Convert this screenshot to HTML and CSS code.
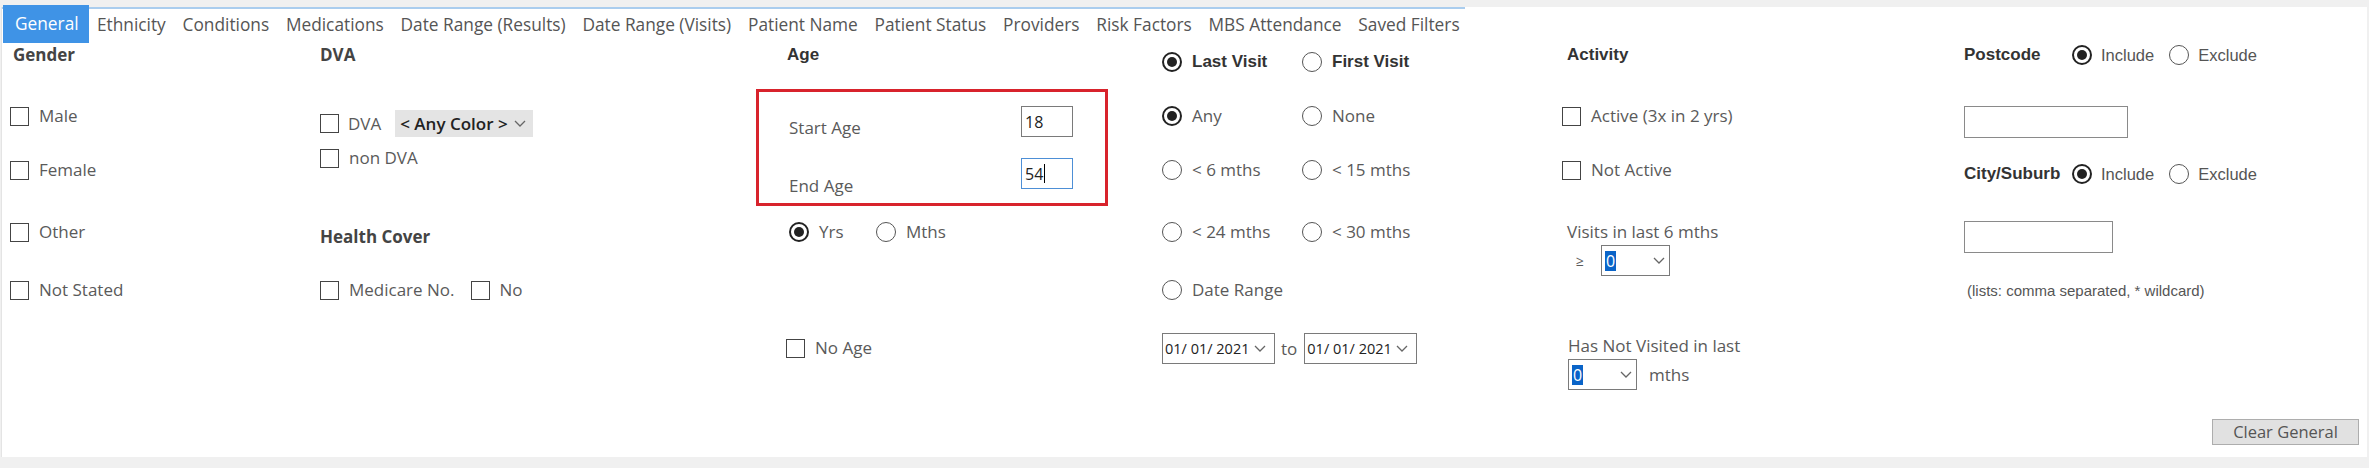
FILE: index.html
```html
<!DOCTYPE html>
<html>
<head>
<meta charset="utf-8">
<link rel="stylesheet" href="styles.css">
</head>
<body>
<div class="panel">
  <div class="tabs">
    <span class="tab active">General</span>
    <span class="tab">Ethnicity</span>
    <span class="tab">Conditions</span>
    <span class="tab">Medications</span>
    <span class="tab">Date Range (Results)</span>
    <span class="tab">Date Range (Visits)</span>
    <span class="tab">Patient Name</span>
    <span class="tab">Patient Status</span>
    <span class="tab">Providers</span>
    <span class="tab">Risk Factors</span>
    <span class="tab">MBS Attendance</span>
    <span class="tab">Saved Filters</span>
  </div>

  <div class="grid">
    <!-- Gender -->
    <div class="col">
      <div class="cell top"><span class="hdr pl3">Gender</span></div>
      <div class="cell"><div class="chk"><span class="box"></span>Male</div></div>
      <div class="cell"><div class="chk mtm4"><span class="box"></span>Female</div></div>
      <div class="cell"><div class="chk"><span class="box"></span>Other</div></div>
      <div class="cell"><div class="chk"><span class="box"></span>Not Stated</div></div>
      <div class="cell"></div>
    </div>

    <!-- DVA -->
    <div class="col">
      <div class="cell top"><span class="hdr">DVA</span></div>
      <div class="cell span2 dva">
        <div class="chk dvarow"><span class="box"></span>DVA
          <span class="combo">&lt; Any Color &gt;<svg class="chev" viewBox="0 0 12 7"><polyline points="1,1 6,6 11,1"/></svg></span>
        </div>
        <div class="chk nondva"><span class="box"></span>non DVA</div>
      </div>
      <div class="cell"><span class="hdr mt10">Health Cover</span></div>
      <div class="cell">
        <div class="chk"><span class="box"></span>Medicare No.</div>
        <div class="chk ml16"><span class="box"></span>No</div>
      </div>
      <div class="cell"></div>
    </div>

    <!-- Age -->
    <div class="col">
      <div class="cell top"><span class="hdr-ar pl31">Age</span></div>
      <div class="cell span2 agecell">
        <div class="agebox">
          <div class="agerow">
            <span class="agelbl">Start Age</span>
            <span class="ageinp">18</span>
          </div>
          <div class="agerow second">
            <span class="agelbl lower">End Age</span>
            <span class="ageinp focus">54<span class="caret"></span></span>
          </div>
        </div>
      </div>
      <div class="cell pl33">
        <div class="rad w87"><span class="dot on"></span>Yrs</div>
        <div class="rad"><span class="dot"></span>Mths</div>
      </div>
      <div class="cell"></div>
      <div class="cell pl30">
        <div class="chk"><span class="box"></span>No Age</div>
      </div>
    </div>

    <!-- Visits -->
    <div class="col">
      <div class="cell top pt7">
        <div class="rad w140 ar-b"><span class="dot on"></span>Last Visit</div>
        <div class="rad ar-b"><span class="dot"></span>First Visit</div>
      </div>
      <div class="cell">
        <div class="rad w140"><span class="dot on"></span>Any</div>
        <div class="rad"><span class="dot"></span>None</div>
      </div>
      <div class="cell">
        <div class="rad w140 mtm4"><span class="dot"></span>&lt; 6 mths</div>
        <div class="rad mtm4"><span class="dot"></span>&lt; 15 mths</div>
      </div>
      <div class="cell">
        <div class="rad w140"><span class="dot"></span>&lt; 24 mths</div>
        <div class="rad"><span class="dot"></span>&lt; 30 mths</div>
      </div>
      <div class="cell">
        <div class="rad"><span class="dot"></span>Date Range</div>
      </div>
      <div class="cell">
        <span class="date">01/ 01/ 2021<svg class="chev" viewBox="0 0 12 7"><polyline points="1,1 6,6 11,1"/></svg></span>
        <span class="to">to</span>
        <span class="date">01/ 01/ 2021<svg class="chev" viewBox="0 0 12 7"><polyline points="1,1 6,6 11,1"/></svg></span>
      </div>
    </div>

    <!-- Activity -->
    <div class="col">
      <div class="cell top"><span class="hdr-ar pl5">Activity</span></div>
      <div class="cell"><div class="chk"><span class="box"></span>Active (3x in 2 yrs)</div></div>
      <div class="cell"><div class="chk mtm4"><span class="box"></span>Not Active</div></div>
      <div class="cell stack pt19">
        <span class="small pl5">Visits in last 6 mths</span>
        <div class="ddrow">
          <span class="ge">&ge;</span>
          <span class="dd"><span class="sel">0</span><svg class="chev" viewBox="0 0 12 7"><polyline points="1,1 6,6 11,1"/></svg></span>
        </div>
      </div>
      <div class="cell"></div>
      <div class="cell stack pt17">
        <span class="small pl6">Has Not Visited in last</span>
        <div class="ddrow pl6">
          <span class="dd"><span class="sel">0</span><svg class="chev" viewBox="0 0 12 7"><polyline points="1,1 6,6 11,1"/></svg></span>
          <span class="mths">mths</span>
        </div>
      </div>
    </div>

    <!-- Postcode -->
    <div class="col">
      <div class="cell top">
        <span class="hdr-ar lblw">Postcode</span>
        <div class="rad ar g9"><span class="dot on"></span>Include</div>
        <div class="rad ar g9 ml15"><span class="dot"></span>Exclude</div>
      </div>
      <div class="cell"><span class="txt w164 mt11"></span></div>
      <div class="cell">
        <span class="hdr-ar lblw">City/Suburb</span>
        <div class="rad ar g9"><span class="dot on"></span>Include</div>
        <div class="rad ar g9 ml15"><span class="dot"></span>Exclude</div>
      </div>
      <div class="cell"><span class="txt w149 mt10"></span></div>
      <div class="cell"><span class="hint">(lists: comma separated, * wildcard)</span></div>
      <div class="cell"></div>
    </div>
  </div>

  <div class="footer">
    <button class="btn">Clear General</button>
  </div>
</div>
</body>
</html>
```

FILE: styles.css
```css
* { box-sizing: border-box; }
html, body { margin: 0; padding: 0; }
body {
  background: #f0f0f0;
  font-family: "Open Sans", "Noto Sans", sans-serif;
  font-size: 17px;
  color: #5a5a5a;
  width: 2369px;
  height: 468px;
  overflow: hidden;
}
.panel {
  margin: 7px 2px 0 1px;
  height: 450px;
  background: #fff;
  border-left: 1px solid #e4e4e4;
}

/* tabs */
.tabs {
  display: flex;
  width: 1463px;
  height: 36px;
  border-top: 2px solid #aacdee;
  padding-left: 1px;
  font-size: 17.3px;
  color: #555;
}
.tab { padding: 0 8.4px; line-height: 32px; white-space: nowrap; }
.tab.active {
  background: #3f93e6;
  color: #fff;
  margin-top: -4px;
  height: 38px;
  line-height: 38px;
  padding: 0 10px 0 12px;
}

/* grid */
.grid {
  display: grid;
  grid-template-columns: 310px 436px 406px 400px 402px 1fr;
  padding-left: 8px;
  height: 334px;
}
.col { display: grid; grid-template-rows: 44px repeat(5, 58px); }
.cell { display: flex; align-items: center; min-width: 0; white-space: nowrap; }
.cell.top { align-items: flex-start; }
.cell.stack { flex-direction: column; align-items: flex-start; justify-content: flex-start; }
.span2 { grid-row: span 2; }

.hdr { font-weight: 700; color: #444; line-height: 24px; font-size: 17px; }
.hdr-ar {
  font-family: "Liberation Sans", Arial, sans-serif;
  font-weight: 700;
  color: #333;
  font-size: 17px;
  line-height: 24px;
}
.ar-b { font-family: "Liberation Sans", Arial, sans-serif; font-weight: 700; color: #333; }
.ar { font-family: "Liberation Sans", Arial, sans-serif; font-size: 16.5px; color: #555; }

.pl3 { padding-left: 3px; }
.pl5 { padding-left: 5px; }
.pl6 { padding-left: 6px; }
.pl30 { padding-left: 30px; }
.pl31 { padding-left: 31px; }
.pl33 { padding-left: 33px; }
.pt7 { padding-top: 7px; }
.pt17 { padding-top: 17px; }
.pt19 { padding-top: 19px; }
.mt10 { margin-top: 10px; }
.mt11 { margin-top: 11px; }
.mtm4 { margin-top: -8px; }
.ml15 { margin-left: 15px; }
.ml16 { margin-left: 16px; }

/* checkbox */
.chk { display: flex; align-items: center; gap: 10px; line-height: 24px; }
.box {
  width: 19px;
  height: 19px;
  border: 1.5px solid #444;
  background: #fff;
  flex: none;
}

/* radio */
.rad { display: flex; align-items: center; gap: 10px; line-height: 24px; }
.rad.g9 { gap: 9px; }
.w140 { width: 140px; }
.w87 { width: 87px; }
.dot {
  width: 20px;
  height: 20px;
  border-radius: 50%;
  border: 1.5px solid #555;
  position: relative;
  flex: none;
}
.dot.on { border: 2px solid #222; }
.dot.on::after {
  content: "";
  position: absolute;
  inset: 3px;
  border-radius: 50%;
  background: #222;
}

/* DVA */
.dva {
  flex-direction: column;
  align-items: flex-start;
  justify-content: flex-start;
  padding-top: 23px;
}
.dvarow { height: 27px; gap: 9px; }
.nondva { margin-top: 11px; height: 20px; }
.combo {
  display: flex;
  align-items: center;
  width: 138px;
  height: 27px;
  margin-left: 5px;
  padding: 0 7px 0 5px;
  background: #e4e4e4;
  font-weight: 600;
  color: #222;
}
.chev {
  width: 12px;
  height: 7px;
  margin-left: auto;
  fill: none;
  stroke: #666;
  stroke-width: 1.3;
  flex: none;
}

/* Age box */
.agecell { align-items: flex-start; }
.agebox {
  margin-top: 2px;
  width: 352px;
  height: 117px;
  border: 3px solid #d8232c;
  padding: 14px 32px 0 30px;
}
.agerow { display: flex; justify-content: space-between; align-items: flex-start; }
.agerow.second { margin-top: 18px; }
.agelbl { line-height: 24px; margin-top: 10px; }
.agelbl.lower { margin-top: 16px; }
.ageinp {
  display: flex;
  align-items: center;
  width: 52px;
  height: 31px;
  border: 1px solid #7a7a7a;
  padding-left: 3px;
  color: #222;
  font-size: 16px;
}
.ageinp.focus { border-color: #4d8fd6; }
.caret { width: 1px; height: 19px; background: #000; margin-left: 1px; }

/* dates */
.date {
  display: flex;
  align-items: center;
  width: 113px;
  height: 31px;
  border: 1px solid #7a7a7a;
  padding: 0 8px 0 2px;
  color: #222;
  font-size: 14.5px;
}
.to { margin: 0 7px 0 6px; }

/* activity dropdowns */
.small { line-height: 20px; }
.ddrow { display: flex; align-items: center; margin-top: 3px; }
.ge { width: 39px; padding-left: 14px; font-size: 14px; }
.dd {
  display: flex;
  align-items: center;
  width: 69px;
  height: 31px;
  border: 1px solid #7a7a7a;
  padding: 0 4px 0 3px;
  font-size: 16px;
}
.sel { background: #0a64c8; color: #fff; line-height: 20px; padding: 0 1px; }
.mths { margin-left: 12px; }

/* postcode */
.lblw { width: 108px; flex: none; }
.txt { display: block; height: 32px; border: 1px solid #8a8a8a; background: #fff; }
.w164 { width: 164px; }
.w149 { width: 149px; }
.hint { font-family: "Liberation Sans", Arial, sans-serif; font-size: 15px; color: #555; padding-left: 3px; }

/* footer */
.footer { display: flex; justify-content: flex-end; padding: 42px 8px 0 0; }
.btn {
  width: 147px;
  height: 26px;
  background: #e1e1e1;
  border: 1px solid #adadad;
  color: #555;
  font-family: "Open Sans", "Noto Sans", sans-serif;
  font-size: 16.5px;
  line-height: 22px;
  padding: 0;
}
```
